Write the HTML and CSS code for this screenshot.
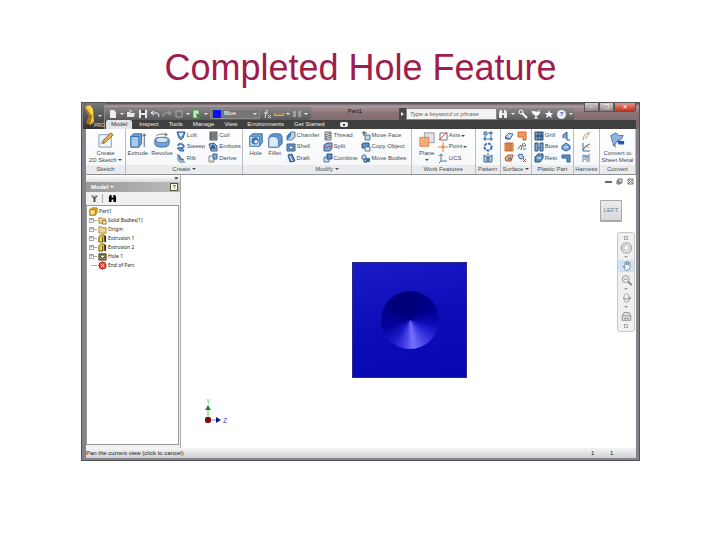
FILE: index.html
```html
<!DOCTYPE html>
<html lang="en">
<head>
  <meta charset="UTF-8">
  <title>Completed Hole Feature</title>
  <link rel="stylesheet" href="styles.css">
</head>
<body>
  <svg class="sprites" aria-hidden="true">
    <symbol id="loft" viewBox="0 0 10 10"><path d="M1 1h8L7 7 5 9 3 7z" fill="#6f9fd0" stroke="#2f5f98"/><path d="M3 2h4L6 5H4z" fill="#e8f2fb"/></symbol>
    <symbol id="sweep" viewBox="0 0 10 10"><path d="M2 4q2-4 5-1 2 2-1 3Q3 6 4 8" fill="none" stroke="#4a7fb8" stroke-width="2"/><path d="M1 6l3 3h4L6 6z" fill="#6f9fd0" stroke="#2f5f98"/></symbol>
    <symbol id="rib" viewBox="0 0 10 10"><path d="M2 1v6l2 2h5" fill="none" stroke="#44658c"/><path d="M3 2q1 4 5 5H4z" fill="#7da9d8" stroke="#3b6ea5"/></symbol>
    <symbol id="coil" viewBox="0 0 10 10"><path d="M2 1h7v8H2z" fill="#a8adb3" stroke="#555"/><path d="M2 3h6M2 5h6M2 7h6" stroke="#444"/></symbol>
    <symbol id="emboss" viewBox="0 0 10 10"><path d="M1 2l5-1 3 3v5H3z" fill="#7da9d8" stroke="#3f638d"/><path d="M3 7l2-4 2 4M4 6h3" fill="none" stroke="#223d60"/></symbol>
    <symbol id="derive" viewBox="0 0 10 10"><path d="M1 3h5v6H1z" fill="#eef3f8" stroke="#7a8998"/><path d="M5 1h4v5H5z" fill="#7da9d8" stroke="#3f638d"/><path d="M2 8h4" stroke="#d0a13a"/></symbol>
    <symbol id="chamfer" viewBox="0 0 10 10"><path d="M1 5l4-4h4v5L6 9H1z" fill="#b9d2eb" stroke="#597da5"/><path d="M1 5l4-4v4L1 9z" fill="#4378b5"/></symbol>
    <symbol id="shell" viewBox="0 0 10 10"><path d="M1 2h8v7H1z" fill="#6f9fd0" stroke="#3b5f8a"/><path d="M3 4h4v3H3z" fill="#f3f7fb" stroke="#3b5f8a"/></symbol>
    <symbol id="draft" viewBox="0 0 10 10"><path d="M2 2l4-1 3 7-5 1z" fill="#5e90c5" stroke="#315580"/><path d="M1 1v8M4 3l2 5" stroke="#dce9f6"/></symbol>
    <symbol id="thread" viewBox="0 0 10 10"><path d="M2 1h6v8H2z" fill="#dde1e6" stroke="#6c737b"/><path d="M2 4l6-2M2 6l6-2M2 8l6-2" stroke="#6c737b"/></symbol>
    <symbol id="split" viewBox="0 0 10 10"><path d="M1 3l3-2h5v5L7 9H1z" fill="#7da9d8" stroke="#3b5f8a"/><path d="M1 6l8-2" stroke="#d2483d"/></symbol>
    <symbol id="combine" viewBox="0 0 10 10"><path d="M1 4h5v5H1z" fill="#c6dbef" stroke="#4b78a8"/><path d="M4 1h5v5H4z" fill="#5e90c5" stroke="#315580"/></symbol>
    <symbol id="moveface" viewBox="0 0 10 10"><path d="M4 4h5v5H4z" fill="#c6dbef" stroke="#4b78a8"/><path d="M1 2h5M3 0v5" stroke="#444"/></symbol>
    <symbol id="copyobj" viewBox="0 0 10 10"><path d="M1 2l2-1h5v5H1z" fill="#5e90c5" stroke="#315580"/><path d="M4 5h5v4H4z" fill="#e6f0fa" stroke="#4b78a8"/></symbol>
    <symbol id="movebody" viewBox="0 0 10 10"><path d="M1 3q2-3 4 0v3H1z" fill="#c6dbef" stroke="#55708c"/><path d="M4 5h5v4H5z" fill="#3f73b0"/><path d="M3 6v3h3" fill="none" stroke="#333"/></symbol>
    <symbol id="axis" viewBox="0 0 10 10"><path d="M2 2h7v7H2z" fill="none" stroke="#667486"/><path d="M1 9l8-8" stroke="#d0574e"/></symbol>
    <symbol id="point" viewBox="0 0 10 10"><path d="M5 0v10M0 5h10" stroke="#d9875a"/><path d="M5 3l2 2-2 2-2-2z" fill="#f28c48"/></symbol>
    <symbol id="ucs" viewBox="0 0 10 10"><path d="M3 1v7h6M3 8L1 10" fill="none" stroke="#54779f"/><path d="M1 3l2-2 2 2" fill="none" stroke="#54779f"/></symbol>
    <symbol id="pat-rect" viewBox="0 0 10 10"><path d="M1 1h3v3H1zM7 1h2v2H7zM1 7h2v2H1zM7 7h2v2H7z" fill="#a7c5e4" stroke="#3c6ea6"/><path d="M5 2h2M2 5v2M8 4v2M4 8h2" stroke="#3c6ea6"/></symbol>
    <symbol id="pat-circ" viewBox="0 0 10 10"><circle cx="5" cy="5" r="3.5" fill="none" stroke="#3c6ea6" stroke-width="2" stroke-dasharray="3 1"/></symbol>
    <symbol id="mirror" viewBox="0 0 10 10"><path d="M1 2l3 2v5H1zM9 2L6 4v5h3z" fill="#b9d2eb" stroke="#3c6ea6"/><path d="M5 0v10" stroke="#555"/></symbol>
    <symbol id="thicken" viewBox="0 0 10 10"><path d="M1 6l4-4 4 1-3 5z" fill="#c6dbef" stroke="#3c6ea6"/><path d="M1 6l5 2v1L1 8z" fill="#3c6ea6"/></symbol>
    <symbol id="patch" viewBox="0 0 10 10"><path d="M1 1h8v8H6V6H1z" fill="#f59a5c" stroke="#cc6a2a"/></symbol>
    <symbol id="stitch" viewBox="0 0 10 10"><path d="M1 1h8v8H1z" fill="#f3a877" stroke="#cc6a2a"/><path d="M5 1v8M3 1v8M7 1v8" stroke="#b55a20"/></symbol>
    <symbol id="trim" viewBox="0 0 10 10"><path d="M1 7l3-4M4 8l2-7M6 4h3M6 7h3" stroke="#58606a"/><path d="M7 1l2 2" stroke="#d0574e"/></symbol>
    <symbol id="sculpt" viewBox="0 0 10 10"><path d="M1 5l3-3h5L7 8H2z" fill="#f3a877" stroke="#a95a2a"/><path d="M4 4h3v3H4z" fill="#6f8eb0"/></symbol>
    <symbol id="delface" viewBox="0 0 10 10"><path d="M1 2l4-1 2 4-4 1z" fill="#b9d2eb" stroke="#3c6ea6"/><path d="M6 6l3 3M9 6L6 9" stroke="#d33"/></symbol>
    <symbol id="grill" viewBox="0 0 10 10"><path d="M1 1h8v8H1z" fill="#7da9d8" stroke="#2b4f7c"/><path d="M4 1v8M7 1v8M1 5h8" stroke="#1f3a5e"/></symbol>
    <symbol id="boss" viewBox="0 0 10 10"><path d="M1 1h3v8H1zM6 1h3v8H6z" fill="#7da9d8" stroke="#2b4f7c"/><path d="M4 6h2" stroke="#2b4f7c"/></symbol>
    <symbol id="rest" viewBox="0 0 10 10"><path d="M1 4l3-3h5v4L6 9H1z" fill="#5e90c5" stroke="#2b4f7c"/><path d="M3 5h4" stroke="#fff"/></symbol>
    <symbol id="snap" viewBox="0 0 10 10"><path d="M2 7V4l4-3v8h3" fill="#7da9d8" stroke="#2f5f98"/></symbol>
    <symbol id="rule" viewBox="0 0 10 10"><path d="M1 4l4-3 4 3v3L5 9 1 7z" fill="#7da9d8" stroke="#2f5f98"/><path d="M3 5h4" stroke="#eef"/></symbol>
    <symbol id="lip" viewBox="0 0 10 10"><path d="M1 2h8v7H6V5H1z" fill="#5e90c5" stroke="#2f5f98"/></symbol>
    <symbol id="wire" viewBox="0 0 10 10"><path d="M2 9q0-6 6-7M4 8l4-5" fill="none" stroke="#e08a4a"/><path d="M6 1h3v2H6z" fill="#b9c6d6"/></symbol>
    <symbol id="cable" viewBox="0 0 10 10"><path d="M2 1v8h7M2 8q2-5 7-6" fill="none" stroke="#3c6ea6"/><path d="M5 5h3" stroke="#e08a4a"/></symbol>
    <symbol id="ribbon-cable" viewBox="0 0 10 10"><path d="M2 2v7M4 2v5M6 2v7M8 1v8M2 2l6 2" fill="none" stroke="#5f7ea5"/></symbol>
    <symbol id="bin" viewBox="0 0 10 10"><path d="M1 9V4l1-3h2v8zM6 9V1h2l1 3v5zM4 4h2v2H4z" fill="currentColor"/></symbol>
    <symbol id="extr" viewBox="0 0 10 10"><path d="M1 3l3-2h3v6L5 9H1z" fill="#f3d33b" stroke="#6a5200"/><path d="M8 2v7" stroke="#333" stroke-width="2"/><path d="M5 3v6" stroke="#6a5200"/></symbol>
  </svg>

  <h1 class="slide-title">Completed Hole Feature</h1>

  <main class="window">
    <header class="top">
      <button class="app-button" aria-label="Application menu">
        <svg viewBox="0 0 22 26"><path d="M2 4l5-2 3 4 1 13-4 3-1-9z" fill="#f4c53a"/><path d="M2 4l4 9-3 7 4 2 2-9z" fill="#a8741a"/><path d="M4 3l4 2 1 6" fill="none" stroke="#fff0a8"/><path d="M15 12h4l-2 2z" fill="#ddd"/><text x="11" y="24">PRO</text></svg>
      </button>

      <div class="title-row">
        <div class="quick">
          <button aria-label="New"><svg viewBox="0 0 10 10"><path d="M2 1h4l2 2v6H2z" fill="#eee"/></svg></button>
          <i class="arrow"></i>
          <button aria-label="Open"><svg viewBox="0 0 10 10"><path d="M1 3h3l1 1h4L8 8H1z" fill="#e4e4e4"/><path d="M3 1l3 2" stroke="#eee"/></svg></button>
          <button aria-label="Save"><svg viewBox="0 0 10 10"><path d="M1 1h8v8H1z" fill="#e7edf3"/><path d="M3 1h4v3H3zM3 6h4v3H3z" fill="#45515e"/></svg></button>
          <button aria-label="Undo"><svg viewBox="0 0 10 10"><path d="M1 4h6q2 0 2 4M1 4l3-2M1 4l3 2" fill="none" stroke="#eee"/></svg></button>
          <button aria-label="Redo"><svg viewBox="0 0 10 10"><path d="M9 4H3Q1 4 1 8M9 4L6 2M9 4L6 6" fill="none" stroke="#a5a5a5"/></svg></button>
          <button aria-label="Select"><svg viewBox="0 0 10 10"><path d="M2 2h6v6H2z" fill="none" stroke="#aaa"/></svg></button>
          <i class="arrow"></i>
          <button aria-label="Update"><svg viewBox="0 0 10 10"><path d="M1 1h6v8H1z" fill="#cfe6cd" stroke="#4c9a4c"/><path d="M4 4l5 3-4 2z" fill="#2d8a3a"/></svg></button>
          <i class="arrow"></i>
          <span class="color-box"><label class="swatch" for="color" aria-label="Color"></label><select id="color" class="color-select"><option>Blue</option></select><i class="arrow"></i></span>
          <button class="fx" aria-label="Parameters"><svg viewBox="0 0 10 10"><path d="M6 1Q4 1 4 4L3 9M2 4h4M6 6l3 3M9 6L6 9" fill="none" stroke="#ddd"/></svg></button>
          <button aria-label="Measure"><svg viewBox="0 0 10 10"><path d="M0 4h10v3H0z" fill="#d6ad55"/><path d="M2 4v2M4 4v2M6 4v2M8 4v2" stroke="#66501f"/></svg></button>
          <i class="arrow"></i>
          <button aria-label="Components"><svg viewBox="0 0 10 10"><path d="M1 2h3v6H1zM6 2h3v6H6z" fill="#a0a0a0"/></svg></button>
          <i class="arrow"></i>
        </div>
        <span class="doc-name">Part1</span>
        <div class="info">
          <button class="expand" aria-label="Collapse search"><i></i></button>
          <input class="search" type="text" aria-label="Search" placeholder="Type a keyword or phrase">
          <div class="info-tools">
            <button aria-label="Find"><svg viewBox="0 0 10 10"><use href="#bin"/></svg></button>
            <i class="arrow"></i>
            <button aria-label="Subscription"><svg viewBox="0 0 10 10"><circle cx="3" cy="3" r="2" fill="none" stroke="#fff"/><path d="M4 4l5 5" stroke="#fff" stroke-width="2"/></svg></button>
            <button aria-label="Communication"><svg viewBox="0 0 10 10"><path d="M1 2q1 5 6 4l2-3" fill="#fff" stroke="#fff"/><path d="M3 9h4M5 6v3M7 3l2-2" stroke="#fff"/></svg></button>
            <button aria-label="Favorites"><svg viewBox="0 0 10 10"><path d="M5 1l1 3h3L7 6l1 3-3-2-3 2 1-3-2-2h3z" fill="#fff"/></svg></button>
            <button class="help" aria-label="Help">?</button>
            <i class="arrow"></i>
          </div>
        </div>
        <div class="window-buttons">
          <button aria-label="Minimize">–</button><button aria-label="Restore">❐</button><button class="close" aria-label="Close">✕</button>
        </div>
      </div>

      <nav class="tabs">
        <a class="active" href="#">Model</a>
        <a href="#">Inspect</a>
        <a href="#">Tools</a>
        <a href="#">Manage</a>
        <a href="#">View</a>
        <a href="#">Environments</a>
        <a href="#">Get Started</a>
        <button aria-label="Minimize ribbon"><i></i></button>
      </nav>
    </header>

    <section class="ribbon">
      <div class="panel">
        <div class="tools">
          <button class="big"><svg viewBox="0 0 18 18"><path d="M1 3h14v14H1z" fill="#eef4fb" stroke="#7d96b2"/><path d="M3 13q3-6 9-7" fill="none" stroke="#8fb0d4"/><path d="M5 13l1-3 8-9 3 2-9 9z" fill="#f0b341" stroke="#80611e"/></svg>Create<br>2D Sketch <i class="arrow"></i></button>
        </div>
        <h2>Sketch</h2>
      </div>

      <div class="panel">
        <div class="tools">
          <button class="big"><svg viewBox="0 0 18 18"><path d="M1 5l3-3h9v11l-3 4H1z" fill="#6fa3d8" stroke="#31639b"/><path d="M1 5h9v12H1z" fill="#a7cbee" stroke="#31639b"/><path d="M16 17V3M14 5l2-3 2 3" fill="none" stroke="#3b5675"/></svg>Extrude</button>
          <button class="big"><svg viewBox="0 0 18 18"><path d="M1 9q0-3 8-3t8 3v4q0 4-8 4t-8-4z" fill="#6fa3d8" stroke="#31639b"/><ellipse cx="9" cy="9" rx="7" ry="3" fill="#d5e6f6" stroke="#56799f"/><path d="M2 5q3-4 12-2M12 1l3 2-3 2" fill="none" stroke="#56697e"/></svg>Revolve</button>
          <div class="stack">
            <button><svg><use href="#loft"/></svg>Loft</button>
            <button><svg><use href="#sweep"/></svg>Sweep</button>
            <button><svg><use href="#rib"/></svg>Rib</button>
          </div>
          <div class="stack">
            <button><svg><use href="#coil"/></svg>Coil</button>
            <button><svg><use href="#emboss"/></svg>Emboss</button>
            <button><svg><use href="#derive"/></svg>Derive</button>
          </div>
        </div>
        <h2>Create <i class="arrow"></i></h2>
      </div>

      <div class="panel">
        <div class="tools">
          <button class="big"><svg viewBox="0 0 18 18"><path d="M2 5l3-3h11v10l-3 4H2z" fill="#6fa3d8" stroke="#31639b"/><path d="M2 5h11v11H2z" fill="#c3dcf4" stroke="#4d7cae"/><circle cx="8" cy="10" r="4" fill="#3d72ad"/><circle cx="9" cy="11" r="2" fill="#dfeefb"/></svg>Hole</button>
          <button class="big"><svg viewBox="0 0 18 18"><path d="M2 8q0-6 6-6h5q4 0 4 5v6l-4 4H2z" fill="#5f98d2" stroke="#31639b"/><path d="M2 9q0-4 5-4t6 4v8H2z" fill="#dceafa" stroke="#4d7cae"/></svg>Fillet</button>
          <div class="stack">
            <button><svg><use href="#chamfer"/></svg>Chamfer</button>
            <button><svg><use href="#shell"/></svg>Shell</button>
            <button><svg><use href="#draft"/></svg>Draft</button>
          </div>
          <div class="stack">
            <button><svg><use href="#thread"/></svg>Thread</button>
            <button><svg><use href="#split"/></svg>Split</button>
            <button><svg><use href="#combine"/></svg>Combine</button>
          </div>
          <div class="stack">
            <button><svg><use href="#moveface"/></svg>Move Face</button>
            <button><svg><use href="#copyobj"/></svg>Copy Object</button>
            <button><svg><use href="#movebody"/></svg>Move Bodies</button>
          </div>
        </div>
        <h2>Modify <i class="arrow"></i></h2>
      </div>

      <div class="panel">
        <div class="tools">
          <button class="big"><svg viewBox="0 0 18 18"><path d="M6 1h11v11H6z" fill="#dfe3e8" stroke="#8d959e"/><path d="M1 6h10v10H1z" fill="#f7a56c" fill-opacity=".9" stroke="#d9783a"/></svg>Plane<br><i class="arrow"></i></button>
          <div class="stack">
            <button><svg><use href="#axis"/></svg>Axis <i class="arrow"></i></button>
            <button><svg><use href="#point"/></svg>Point <i class="arrow"></i></button>
            <button><svg><use href="#ucs"/></svg>UCS</button>
          </div>
        </div>
        <h2>Work Features</h2>
      </div>

      <div class="panel">
        <div class="tools">
          <div class="stack">
            <button aria-label="Rectangular"><svg><use href="#pat-rect"/></svg></button>
            <button aria-label="Circular"><svg><use href="#pat-circ"/></svg></button>
            <button aria-label="Mirror"><svg><use href="#mirror"/></svg></button>
          </div>
        </div>
        <h2>Pattern</h2>
      </div>

      <div class="panel">
        <div class="tools">
          <div class="stack">
            <button aria-label="Thicken"><svg><use href="#thicken"/></svg></button>
            <button aria-label="Stitch"><svg><use href="#stitch"/></svg></button>
            <button aria-label="Sculpt"><svg><use href="#sculpt"/></svg></button>
          </div>
          <div class="stack">
            <button aria-label="Patch"><svg><use href="#patch"/></svg></button>
            <button aria-label="Trim"><svg><use href="#trim"/></svg></button>
            <button aria-label="Delete Face"><svg><use href="#delface"/></svg></button>
          </div>
        </div>
        <h2>Surface <i class="arrow"></i></h2>
      </div>

      <div class="panel">
        <div class="tools">
          <div class="stack">
            <button><svg><use href="#grill"/></svg>Grill</button>
            <button><svg><use href="#boss"/></svg>Boss</button>
            <button><svg><use href="#rest"/></svg>Rest</button>
          </div>
          <div class="stack">
            <button aria-label="Snap Fit"><svg><use href="#snap"/></svg></button>
            <button aria-label="Rule Fillet"><svg><use href="#rule"/></svg></button>
            <button aria-label="Lip"><svg><use href="#lip"/></svg></button>
          </div>
        </div>
        <h2>Plastic Part</h2>
      </div>

      <div class="panel">
        <div class="tools">
          <div class="stack">
            <button aria-label="Wire"><svg><use href="#wire"/></svg></button>
            <button aria-label="Cable"><svg><use href="#cable"/></svg></button>
            <button aria-label="Ribbon Cable"><svg><use href="#ribbon-cable"/></svg></button>
          </div>
        </div>
        <h2>Harness</h2>
      </div>

      <div class="panel">
        <div class="tools">
          <button class="big"><svg viewBox="0 0 18 18"><path d="M2 4l6-3 3 3 5 0-3 5-4 1-3 6-2-5z" fill="#8db7e0" stroke="#3b6ea5"/><path d="M9 10h8v4h-6z" fill="#2b56b0"/><path d="M4 14l4 3" stroke="#3b6ea5"/></svg>Convert to<br>Sheet Metal</button>
        </div>
        <h2>Convert</h2>
      </div>
    </section>

    <div class="work">
      <aside class="browser">
        <div class="grip"><button aria-label="Close browser">×</button></div>
        <div class="browser-head"><span>Model <i class="arrow"></i></span><button aria-label="Browser help">?</button></div>
        <div class="browser-tools">
          <button aria-label="Filter"><svg viewBox="0 0 10 10"><path d="M1 2h8L6 5v4H4V5z" fill="#444"/><path d="M3 3h4" stroke="#ddd"/></svg></button>
          <button aria-label="Find"><svg viewBox="0 0 10 10"><use href="#bin"/></svg></button>
        </div>
        <ul class="tree">
          <li class="root"><svg viewBox="0 0 10 10"><path d="M1 3l2-2h6v5L7 9H1z" fill="#f6b92e" stroke="#a87008"/><path d="M1 3h6v6H1z" fill="#ffe07a" stroke="#a87008"/></svg>Part1</li>
          <li><b>+</b><svg viewBox="0 0 10 10"><path d="M1 2h3l1 1h3v5H1z" fill="#f3d48a" stroke="#a8843d"/><path d="M5 5h4v4H5z" fill="#f3e6c0" stroke="#8a7040"/></svg>Solid Bodies(1)</li>
          <li><b>+</b><svg viewBox="0 0 10 10"><path d="M1 2h3l1 1h4v6H1z" fill="#f1d68f" stroke="#a8843d"/></svg>Origin</li>
          <li><b>+</b><svg><use href="#extr"/></svg>Extrusion 1</li>
          <li><b>+</b><svg><use href="#extr"/></svg>Extrusion 2</li>
          <li><b>+</b><svg viewBox="0 0 10 10"><path d="M1 2h8v7H1z" fill="#9a9a3c" stroke="#333"/><circle cx="5" cy="5" r="2" fill="#fff" stroke="#222"/></svg>Hole 1</li>
          <li class="end"><b></b><svg viewBox="0 0 10 10"><circle cx="5" cy="5" r="4" fill="#e84545" stroke="#a31818"/><path d="M3 3l4 4M7 3L3 7" stroke="#fff"/></svg>End of Part</li>
        </ul>
      </aside>

      <section class="viewport">
        <div class="part"><div class="hole"></div></div>

        <div class="doc-buttons">
          <button aria-label="Minimize document"><svg viewBox="0 0 7 7"><path d="M0 4h7" stroke="#666" stroke-width="2"/></svg></button>
          <button aria-label="Restore document"><svg viewBox="0 0 7 7"><path d="M2 1h4v4H2zM1 3h3v3H1z" fill="none" stroke="#666"/></svg></button>
          <button aria-label="Close document"><svg viewBox="0 0 7 7"><path d="M1 1h5v5H1zM1 1l5 5M6 1L1 6" fill="none" stroke="#777"/></svg></button>
        </div>

        <button class="view-cube">LEFT</button>

        <div class="nav-bar">
          <button class="tiny" aria-label="Close navigation bar"></button>
          <button aria-label="Steering wheel"><svg viewBox="0 0 14 14"><circle cx="7" cy="7" r="6" fill="#e8e8e8" stroke="#8c8c8c"/><path d="M4 5q3-3 6 0v4q-3 2-6 0z" fill="#fafafa" stroke="#aaa"/></svg></button>
          <i class="arrow"></i>
          <button class="on" aria-label="Pan"><svg viewBox="0 0 14 14"><path d="M3 7l2 2V3h2v3-4h2v4-3h2v6l-2 3H6z" fill="#f6f9fc" stroke="#6d8298"/></svg></button>
          <button aria-label="Zoom"><svg viewBox="0 0 14 14"><circle cx="6" cy="6" r="4" fill="#eee" stroke="#888"/><path d="M9 9l4 4" stroke="#777" stroke-width="2"/><path d="M4 6h4" stroke="#888"/></svg></button>
          <i class="arrow"></i>
          <button aria-label="Orbit"><svg viewBox="0 0 14 14"><ellipse cx="7" cy="7" rx="3" ry="5" fill="none" stroke="#999"/><path d="M3 7q4 3 9 0M10 5l2 2-2 2" fill="none" stroke="#888"/></svg></button>
          <i class="arrow"></i>
          <button aria-label="Look at"><svg viewBox="0 0 14 14"><path d="M2 7l2-4h6l2 4v5H2z" fill="#e3e3e3" stroke="#888"/><path d="M2 7h10M4 10h6" stroke="#888"/></svg></button>
          <button class="tiny" aria-label="Navigation options"></button>
        </div>

        <svg class="triad" viewBox="0 0 26 28"><path d="M5 22V9" stroke="#5fd05f"/><path d="M5 7l3 5H2z" fill="#1f8a2c"/><path d="M5 22h10" stroke="#7f90ff"/><path d="M13 19l5 3-5 3z" fill="#10108c"/><rect x="2" y="19" width="6" height="6" rx="2" fill="#7c0d12"/><text x="3" y="6" fill="#58d058">Y</text><text x="20" y="25" fill="#3a3ae0">Z</text></svg>
      </section>
    </div>

    <footer class="status">
      <span>Pan the current view (click to cancel)</span>
      <span class="count">1</span>
      <span class="count">1</span>
    </footer>
  </main>
</body>
</html>
```

FILE: styles.css
```css
:root {
  --frame: #85828a;
  --dark: #404040;
  --text: #454b55;
  --line: #b9bdc2;
}

* {
  box-sizing: border-box;
}

body {
  margin: 0;
  min-height: 100vh;
  padding: 48px 80px 79px 81px;
  display: flex;
  flex-direction: column;
  background: #fff;
  color: var(--text);
  font-family: "Liberation Sans", Arial, sans-serif;
}

.sprites {
  display: none;
}

.slide-title {
  margin: 0 0 14px;
  font-size: 36px;
  line-height: 40px;
  font-weight: normal;
  text-align: center;
  color: #a01c4c;
}

button,
input,
select {
  margin: 0;
  padding: 0;
  border: 0;
  background: none;
  font: inherit;
  color: inherit;
}

svg {
  display: block;
}

.arrow {
  display: inline-block;
  flex: none;
  border: 2px solid transparent;
  border-top-color: currentColor;
  border-bottom: 0;
  vertical-align: middle;
}

/* Window frame */
.window {
  flex: 1;
  display: flex;
  flex-direction: column;
  border: solid var(--frame);
  border-width: 0 4px 3px 5px;
  outline: 1px solid #55525a;
  outline-offset: -1px;
  background: #fff;
  font-size: 6px;
  line-height: 7px;
}

.top {
  display: grid;
  grid-template-columns: 22px 1fr;
  grid-template-rows: 17px 9px;
  margin: 0 -3px;
  background: linear-gradient(#5e4a50, #a99b9d 3px, #8a7376 10px, #77656a);
  border-top: 1px solid #4b454b;
  color: #eee;
}

.app-button {
  grid-row: 1 / 3;
  background: linear-gradient(#777, #333);
  border-right: 1px solid #888;
}

.app-button svg {
  width: 22px;
  height: 26px;
}

.app-button text {
  font-size: 5px;
  fill: #ddd;
}

.title-row {
  display: flex;
  align-items: stretch;
}

.quick {
  display: flex;
  align-items: center;
  gap: 2px;
  margin-top: 4px;
  padding: 0 3px;
  border-radius: 0 0 4px 0;
  background: linear-gradient(#8b8788, #58585a);
}

.quick svg,
.info-tools svg {
  width: 10px;
  height: 10px;
}

.color-box {
  display: flex;
  align-items: center;
  gap: 3px;
  height: 10px;
  width: 50px;
  padding: 0 2px;
  background: #777576;
  border: 1px solid #8f8d8e;
}

.swatch {
  width: 8px;
  height: 8px;
  background: #0a14e6;
}

.color-select {
  flex: 1;
  width: 24px;
  appearance: none;
  color: #fff;
}

.doc-name {
  flex: 1;
  align-self: center;
  text-align: center;
  color: #221518;
}

.info {
  display: flex;
  margin-top: 5px;
}

.expand {
  width: 7px;
  background: #4a4748;
}

.expand i {
  display: block;
  margin-left: 2px;
  border: 2px solid transparent;
  border-left: 3px solid #eee;
  border-right: 0;
  width: 0;
}

.search {
  width: 91px;
  padding: 0 3px;
  background: #f4f2f2;
  border: 1px solid #888;
  font-style: italic;
}

.search::placeholder {
  color: #666;
}

.info-tools {
  display: flex;
  align-items: center;
  gap: 3px;
  padding: 0 1px;
  background: linear-gradient(#8b8788, #58585a);
}

.help {
  width: 9px;
  height: 9px;
  border-radius: 50%;
  background: #e6edf8;
  color: #2b4fa0;
  font-weight: bold;
}

.window-buttons {
  display: flex;
  height: 9px;
  margin: 0 3px 0 10px;
  font-family: "DejaVu Sans", sans-serif;
}

.window-buttons button {
  width: 15px;
  border: 1px solid #5d5558;
  border-top: 0;
  background: linear-gradient(#d8cccc, #8d8184);
  line-height: 6px;
}

.window-buttons .close {
  width: 22px;
  border-radius: 0 0 3px 0;
  background: linear-gradient(#e0978a, #c2301c);
  color: #fff;
}

.tabs {
  display: flex;
  align-items: center;
  gap: 8px;
  margin-right: 3px;
  padding-left: 1px;
  background: var(--dark);
}

.tabs a {
  color: #eee;
  text-decoration: none;
  line-height: 9px;
}

.tabs .active {
  padding: 0 5px;
  margin-right: -2px;
  border-radius: 2px 2px 0 0;
  background: #e2e4e7;
  color: #333;
}

.tabs a + a {
  padding: 0 1px;
}

.tabs button {
  width: 8px;
  height: 5px;
  margin-left: 6px;
  border-radius: 2px;
  background: #eee;
}

.tabs button i {
  display: block;
  margin: 1px auto;
  width: 2px;
  height: 2px;
  background: #444;
}

/* Ribbon */
.ribbon {
  display: grid;
  grid-template-columns: 40fr 117fr 168fr 64fr 25fr 31fr 42fr 26fr 36fr;
  border-bottom: 1px solid #8e9196;
}

.panel {
  min-width: 0;
  display: flex;
  flex-direction: column;
  border-right: 1px solid var(--line);
}

.tools {
  flex: 1;
  display: flex;
  justify-content: center;
  gap: 3px;
  height: 37px;
  padding: 1px 0;
  background: linear-gradient(#fff, #f6f8fa);
}

.tools button {
  white-space: nowrap;
}

.big {
  display: flow-root;
  align-self: flex-start;
  text-align: center;
}

.big svg {
  width: 16px;
  height: 16px;
  margin: 2px auto;
}

.stack {
  display: flex;
  flex-direction: column;
  justify-content: space-around;
}

.stack button {
  display: flex;
  align-items: center;
  gap: 1px;
}

.stack svg {
  flex: none;
  width: 10px;
  height: 10px;
}

.panel h2 {
  margin: 0;
  height: 9px;
  font-size: 6px;
  line-height: 9px;
  font-weight: normal;
  text-align: center;
  white-space: nowrap;
  background: #e9ebed;
}

/* Browser and view */
.work {
  flex: 1;
  display: flex;
}

.browser {
  width: 95px;
  display: flex;
  flex-direction: column;
  background: #f0f0f0;
  border-right: 1px solid #aaa;
}

.grip {
  height: 7px;
  padding-right: 2px;
  background: linear-gradient(#fff, #ddd);
  font-weight: bold;
  line-height: 6px;
}

.grip button {
  display: block;
  margin-left: auto;
  color: #000;
}

.browser-head {
  display: flex;
  justify-content: space-between;
  align-items: center;
  height: 10px;
  padding: 0 2px 0 5px;
  background: linear-gradient(90deg, #999, #bbb);
  color: #fff;
  font-weight: bold;
}

.browser-head button {
  width: 8px;
  height: 8px;
  border: 1px solid #4f5a35;
  background: #fffff0;
  color: #4f5a35;
  line-height: 6px;
}

.browser-tools {
  display: flex;
  align-items: center;
  height: 13px;
  padding-left: 1px;
  color: #000;
}

.browser-tools button {
  padding: 0 3px;
}

.browser-tools button + button {
  padding-left: 5px;
  border-left: 1px solid #aaa;
}

.browser-tools svg {
  width: 9px;
  height: 9px;
}

.tree {
  flex: 1;
  margin: 0 1px 3px 0;
  padding: 1px 0 0 2px;
  list-style: none;
  background: #fff;
  border: 1px solid #999;
  color: #222;
  font-family: "Noto Sans", sans-serif;
  font-size: 5px;
}

.tree li {
  display: flex;
  align-items: center;
  height: 9px;
  gap: 1px;
}

.tree svg {
  width: 9px;
  height: 9px;
}

.tree b {
  position: relative;
  width: 5px;
  height: 5px;
  margin-right: 3px;
  border: 1px solid #aaa;
  color: #777;
  font-size: 5px;
  line-height: 3px;
  text-align: center;
}

.tree b::after {
  content: "";
  position: absolute;
  left: 4px;
  top: 1px;
  width: 3px;
  border-top: 1px solid #aaa;
}

.tree .end b {
  height: 1px;
  border: 0;
}

.tree .end b::after {
  left: 2px;
  top: 0;
  width: 6px;
}

.viewport {
  position: relative;
  flex: 1;
  display: flex;
  align-items: center;
  justify-content: center;
  padding: 16px 0 0 2px;
  background: #fff;
}

.part {
  display: flex;
  align-items: center;
  justify-content: center;
  width: 115px;
  height: 116px;
  border: 1px solid #2a2a86;
  background: linear-gradient(165deg, #1a1ac8, #0d0db8 50%, #0808b2);
}

.hole {
  width: 58px;
  height: 58px;
  border-radius: 50%;
  background: conic-gradient(#000078, #00008c 60deg, #0a0ab4 100deg, #2a2ad8 130deg, #4a46ea 150deg, #7672fa 172deg, #4844ea 190deg, #1c1cc8 215deg, #0404a0 250deg, #000080 300deg, #000078);
}

.doc-buttons {
  position: absolute;
  top: 3px;
  right: 2px;
  display: flex;
  gap: 4px;
}

.doc-buttons svg {
  width: 7px;
  height: 7px;
}

.view-cube {
  position: absolute;
  top: 25px;
  right: 14px;
  width: 22px;
  height: 22px;
  border: 1px solid #aaa;
  border-width: 1px 1px 2px 1px;
  border-radius: 1px;
  background: linear-gradient(#ececee, #d8d8dc);
  color: #777b88;
}

.nav-bar {
  position: absolute;
  top: 57px;
  right: 1px;
  width: 18px;
  display: flex;
  flex-direction: column;
  align-items: center;
  gap: 2px;
  padding: 3px 0;
  border: 1px solid #c8c8c8;
  border-radius: 3px;
  background: #f0f0f0;
  color: #999;
}

.nav-bar svg {
  width: 13px;
  height: 12px;
}

.nav-bar .on {
  width: 100%;
  display: flex;
  justify-content: center;
  background: #cfe3f3;
}

.nav-bar .tiny {
  width: 4px;
  height: 4px;
  border: 1px solid #aaa;
}

.triad {
  position: absolute;
  left: 22px;
  bottom: 22px;
  width: 26px;
  height: 28px;
}

.triad text {
  font-size: 7px;
}

.status {
  display: flex;
  align-items: center;
  height: 10px;
  padding-right: 22px;
  background: linear-gradient(#f4f4f4, #cfd1d3);
  color: #222;
}

.status span:first-child {
  flex: 1;
}

.count {
  width: 4px;
  margin-left: 15px;
}
```
